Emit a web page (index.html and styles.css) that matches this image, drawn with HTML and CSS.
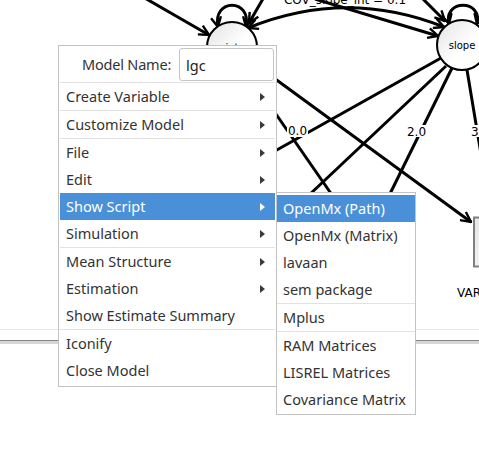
FILE: index.html
```html
<!DOCTYPE html>
<html>
<head>
<meta charset="utf-8">
<title>Model menu</title>
<link rel="stylesheet" href="styles.css">
</head>
<body>
<div class="stage">
  <div class="canvas">
    <svg class="diagram" width="479" height="329" viewBox="0 0 479 329">
      <defs>
        <marker id="ah" markerUnits="userSpaceOnUse" viewBox="0 0 12 12" refX="11" refY="6" markerWidth="12" markerHeight="12" orient="auto-start-reverse">
          <path d="M1,1 L11,6 L1,11" fill="none" stroke="#000" stroke-width="2.4"/>
        </marker>
        <linearGradient id="nodefill" x1="0" y1="0" x2="1" y2="1">
          <stop offset="0" stop-color="#e2e2e2"/>
          <stop offset="0.55" stop-color="#ffffff"/>
          <stop offset="1" stop-color="#ffffff"/>
        </linearGradient>
        <linearGradient id="boxfill" x1="0" y1="0" x2="1" y2="1">
          <stop offset="0" stop-color="#e6e6e6"/>
          <stop offset="1" stop-color="#f8f8f8"/>
        </linearGradient>
      </defs>
      <g class="paths">
        <path d="M143,-3 L209,35" marker-end="url(#ah)"/>
        <path d="M218,27 C212,-2 252,-2 246,27" marker-start="url(#ah)" marker-end="url(#ah)"/>
        <path d="M264,-3 L249,23" marker-end="url(#ah)"/>
        <path d="M248,28 Q346,-12 444,27" marker-start="url(#ah)" marker-end="url(#ah)"/>
        <path d="M315,-1 L438,36" marker-end="url(#ah)"/>
        <path d="M422,-2 L445,21" marker-end="url(#ah)"/>
        <path d="M449,24 C443,-1 483,-1 477,24" marker-start="url(#ah)" marker-end="url(#ah)"/>
        <path d="M252,62 L471,222" marker-end="url(#ah)"/>
        <path d="M244,68 L348,218"/>
        <path d="M441,58 L250,165"/>
        <path d="M446,66 L290,213"/>
        <path d="M452,68 L382,210"/>
        <path d="M467,70 L482,160"/>
      </g>
      <circle class="node" cx="232" cy="47" r="25"/>
      <text class="node-label" x="232" y="50.5">int</text>
      <circle class="node" cx="462" cy="45" r="25"/>
      <text class="node-label" x="462" y="48.5">slope</text>
      <rect class="box" x="474" y="217.5" width="20" height="49"/>
      <text class="var-label" x="457" y="297">VAR1</text>
      <text class="edge-label mid" x="345" y="4">COV_slope_int = 0.1</text>
      <rect class="label-bg" x="287" y="125" width="21" height="12"/>
      <text class="edge-label mid" x="297.5" y="135">0.0</text>
      <rect class="label-bg" x="406" y="125" width="21" height="12"/>
      <text class="edge-label mid" x="416.5" y="136">2.0</text>
      <rect class="label-bg" x="470" y="125" width="12" height="12"/>
      <text class="edge-label" x="471" y="136">3.0</text>
    </svg>
  </div>
  <div class="divider"></div>

  <div class="menu">
    <div class="name-row">
      <span class="name-label">Model Name:</span>
      <input class="name-input" type="text" value="lgc">
    </div>
    <div class="sep"></div>
    <div class="item"><span>Create Variable</span><span class="arrow"></span></div>
    <div class="sep"></div>
    <div class="item"><span>Customize Model</span><span class="arrow"></span></div>
    <div class="sep"></div>
    <div class="item"><span>File</span><span class="arrow"></span></div>
    <div class="item"><span>Edit</span><span class="arrow"></span></div>
    <div class="item active"><span>Show Script</span><span class="arrow"></span></div>
    <div class="item"><span>Simulation</span><span class="arrow"></span></div>
    <div class="sep"></div>
    <div class="item"><span>Mean Structure</span><span class="arrow"></span></div>
    <div class="item"><span>Estimation</span><span class="arrow"></span></div>
    <div class="item"><span>Show Estimate Summary</span></div>
    <div class="sep"></div>
    <div class="item"><span>Iconify</span></div>
    <div class="item"><span>Close Model</span></div>
  </div>

  <div class="submenu">
    <div class="item active"><span>OpenMx (Path)</span></div>
    <div class="item"><span>OpenMx (Matrix)</span></div>
    <div class="item"><span>lavaan</span></div>
    <div class="item"><span>sem package</span></div>
    <div class="sep"></div>
    <div class="item"><span>Mplus</span></div>
    <div class="sep"></div>
    <div class="item"><span>RAM Matrices</span></div>
    <div class="item"><span>LISREL Matrices</span></div>
    <div class="item"><span>Covariance Matrix</span></div>
  </div>
</div>
</body>
</html>
```

FILE: styles.css
```css
html, body {
  margin: 0;
  padding: 0;
  background: #ffffff;
}

body {
  width: 479px;
  height: 451px;
  overflow: hidden;
  font-family: "Noto Sans", "DejaVu Sans", sans-serif;
}

.stage {
  position: relative;
  width: 479px;
  height: 451px;
}

.canvas {
  height: 329px;
  border-bottom: 1px solid #e6e6e6;
  overflow: hidden;
}

.diagram {
  display: block;
}

.paths path {
  fill: none;
  stroke: #000000;
  stroke-width: 3;
}

.node {
  fill: url(#nodefill);
  stroke: #000000;
  stroke-width: 2;
}

.node-label {
  font-family: "DejaVu Sans", sans-serif;
  font-size: 10px;
  text-anchor: middle;
  fill: #000000;
}

.box {
  fill: url(#boxfill);
  stroke: #808080;
  stroke-width: 2;
}

.var-label,
.edge-label {
  font-family: "DejaVu Sans", sans-serif;
  font-size: 12px;
  fill: #000000;
}

.edge-label.mid {
  text-anchor: middle;
}

.label-bg {
  fill: #ffffff;
}

.divider {
  margin-top: 10px;
  height: 3px;
  border-top: 1px solid #858585;
  background: #d6d6d6;
}

.menu,
.submenu {
  position: absolute;
  box-sizing: border-box;
  background: #ffffff;
  border: 1px solid #c3c3c3;
  font-family: "Noto Sans", "DejaVu Sans", sans-serif;
  font-size: 14.5px;
  color: #333333;
}

.menu {
  left: 58px;
  top: 45px;
  width: 219px;
  padding: 0 1px 2px;
}

.submenu {
  left: 276px;
  top: 192px;
  width: 140px;
  padding: 2px 0 1px;
}

.name-row {
  display: flex;
  align-items: flex-start;
  height: 36px;
  box-sizing: border-box;
  padding: 2px 1px 0 22px;
}

.name-label {
  line-height: 33px;
  white-space: nowrap;
  letter-spacing: -0.2px;
}

.name-input {
  width: 95px;
  height: 33px;
  box-sizing: border-box;
  margin: 0 0 0 auto;
  border: 1px solid #c4c4c4;
  border-radius: 3px;
  padding: 0 6px;
  font: inherit;
  color: #222222;
  background: #ffffff;
  outline: none;
}

.sep {
  height: 1px;
  background: #e2e2e2;
}

.item {
  display: flex;
  align-items: center;
  justify-content: space-between;
  height: 27px;
  line-height: 27px;
  padding: 0 10px 0 6px;
  white-space: nowrap;
}

.arrow {
  width: 0;
  height: 0;
  border-left: 5px solid #3a3a3a;
  border-top: 4.5px solid transparent;
  border-bottom: 4.5px solid transparent;
}

.item.active {
  background: #4a90d9;
  color: #ffffff;
}

.item.active .arrow {
  border-left-color: #ffffff;
}
```
